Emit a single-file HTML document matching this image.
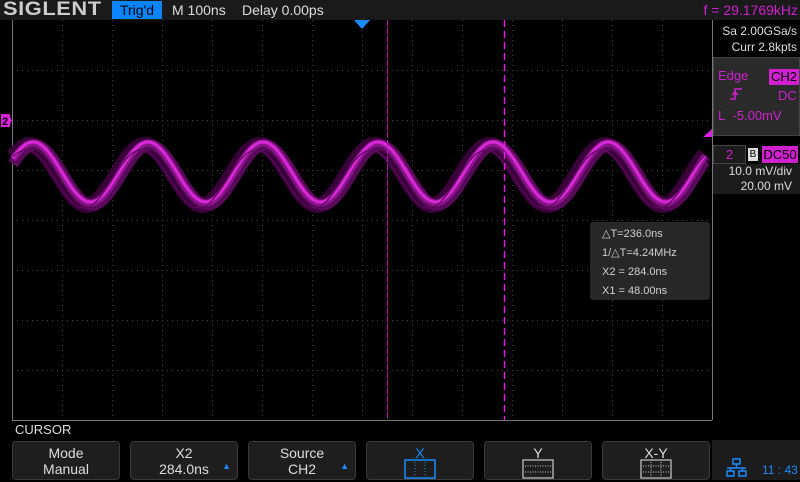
<!DOCTYPE html>
<html><head><meta charset="utf-8"><style>
body{margin:0;width:800px;height:480px;background:#000;overflow:hidden;font-family:"Liberation Sans",sans-serif;position:relative}
.a{position:absolute}
.top{left:0;top:0;width:800px;height:20px;background:#1a1a1a}
.btn{position:absolute;top:441px;width:108px;height:39px;background:#1e1e1e;border:1px solid #3a3a3a;border-radius:4px;color:#ddd;font-size:14px;text-align:center;line-height:16px;box-sizing:border-box;padding-top:3px}
</style></head><body>
<div class="a top"></div>
<div class="a" style="left:3px;top:0;font-size:19px;font-weight:bold;color:#ccc;letter-spacing:0.5px;line-height:20px;transform:scaleX(1.15);transform-origin:left">SIGLENT</div>
<div class="a" style="left:112px;top:1px;width:50px;height:18px;background:#0a84ff;color:#000;font-size:14px;line-height:18px;text-align:center">Trig'd</div>
<div class="a" style="left:172px;top:1px;color:#ddd;font-size:14px;line-height:18px">M 100ns</div>
<div class="a" style="left:242px;top:1px;color:#ddd;font-size:14px;line-height:18px">Delay 0.00ps</div>
<div class="a" style="top:1px;color:#d020d0;font-size:14px;line-height:18px;width:150px;text-align:right;right:2px">f = 29.1769kHz</div>

<svg class="a" style="left:0;top:0" width="800" height="480" id="s">
<g stroke="#444" stroke-width="1" stroke-dasharray="1,4" id="grid"></g>
<line x1="12.5" y1="20" x2="12.5" y2="420" stroke="#777"/>
<line x1="12" y1="420.5" x2="712" y2="420.5" stroke="#777"/>
<line x1="712.5" y1="20" x2="712.5" y2="420" stroke="#777"/>
<g id="w" fill="none"></g>
<line x1="387.5" y1="20" x2="387.5" y2="420" stroke="#b018b0" stroke-dasharray="6,2"/>
<line x1="504.5" y1="20" x2="504.5" y2="420" stroke="#e020e0" stroke-width="1.5" stroke-dasharray="7,4"/>
<polygon points="354,20 370,20 362,29" fill="#1a8cff"/>
<rect x="1" y="114" width="9" height="13" rx="1" fill="#e020e0"/><polygon points="10,117 12,120.5 10,124" fill="#e020e0"/><text x="2" y="125" font-size="11" font-weight="bold" fill="#000" font-family="Liberation Sans">2</text>
<polygon points="703,137 712,137 712,129" fill="#e020e0"/>
</svg>

<div class="a" style="left:590px;top:222px;width:120px;height:78px;background:#2a2a2a;border-radius:3px;opacity:.95;color:#ddd;font-size:11px;line-height:19px;padding:3px 0 0 12px;box-sizing:border-box">△T=236.0ns<br>1/△T=4.24MHz<br>X2 = 284.0ns<br>X1 = 48.00ns</div>

<div class="a" style="left:713px;top:20px;width:87px;height:36px;color:#ddd;font-size:12px;line-height:16px;text-align:right;padding:3px 3px 0 0;box-sizing:border-box">Sa 2.00GSa/s<br>Curr 2.8kpts</div>
<div class="a" style="left:713px;top:57px;width:87px;height:79px;background:#2a2a2a;border:1px solid #444;box-sizing:border-box"></div>
<div class="a" style="left:718px;top:68px;color:#d020d0;font-size:13px">Edge</div>
<div class="a" style="left:769px;top:69px;width:30px;height:16px;background:#d020d0;color:#000;font-size:13px;line-height:16px;text-align:center">CH2</div>
<svg class="a" style="left:729px;top:87px" width="14" height="14"><path d="M1 12H6V2H13M3 8L6 5L9 8" stroke="#d020d0" fill="none" stroke-width="1.5"/></svg>
<div class="a" style="left:778px;top:88px;color:#d020d0;font-size:13px">DC</div>
<div class="a" style="left:718px;top:108px;color:#d020d0;font-size:13px">L&nbsp; -5.00mV</div>
<div class="a" style="left:713px;top:145px;width:33px;height:19px;background:#1c1c1c;border:1px solid #444;color:#d020d0;font-size:13px;line-height:18px;text-align:center;box-sizing:border-box">2</div>
<div class="a" style="left:748px;top:148px;width:10px;height:13px;background:#ddd;color:#000;font-size:10px;line-height:13px;text-align:center">B</div>
<div class="a" style="left:762px;top:146px;width:36px;height:17px;background:#d020d0;color:#000;font-size:13px;line-height:17px;text-align:center">DC50</div>
<div class="a" style="left:713px;top:164px;width:87px;height:30px;background:#1c1c1c;color:#ddd;font-size:12px;line-height:15px;text-align:right;padding-right:8px;box-sizing:border-box">10.0 mV/div<br>20.00 mV</div>

<div class="a" style="left:15px;top:422px;color:#ddd;font-size:13px">CURSOR</div>
<div class="btn" style="left:12px">Mode<br>Manual</div>
<div class="btn" style="left:130px">X2<br>284.0ns<span class="a" style="right:6px;top:16px;color:#1a8cff;font-size:9px">▲</span></div>
<div class="btn" style="left:248px">Source<br>CH2<span class="a" style="right:6px;top:16px;color:#1a8cff;font-size:9px">▲</span></div>
<div class="btn" style="left:366px;color:#1a8cff">X<br><svg width="32" height="20" style="margin-top:-2px"><rect x="1" y="1" width="30" height="18" fill="none" stroke="#1a8cff" stroke-width="1.5"/><path d="M11 3V17M21 3V17" stroke="#1a8cff" stroke-dasharray="1,2"/></svg></div>
<div class="btn" style="left:484px">Y<br><svg width="32" height="20" style="margin-top:-2px"><rect x="1" y="1" width="30" height="18" fill="none" stroke="#ccc" stroke-width="1.2"/><path d="M3 7H29M3 13H29" stroke="#ccc" stroke-dasharray="1,1.5"/></svg></div>
<div class="btn" style="left:602px">X-Y<br><svg width="32" height="20" style="margin-top:-2px"><rect x="1" y="1" width="30" height="18" fill="none" stroke="#ccc" stroke-width="1.2"/><path d="M3 7H29M3 13H29M11 3V17M21 3V17" stroke="#ccc" stroke-dasharray="1,1.5"/></svg></div>
<div class="a" style="left:712px;top:440px;width:88px;height:40px;background:#1c1c1c"></div>
<svg class="a" style="left:726px;top:458px" width="22" height="20"><g fill="none" stroke="#1a8cff" stroke-width="1.5"><rect x="7" y="1" width="7" height="5"/><rect x="1" y="13" width="7" height="5"/><rect x="13" y="13" width="7" height="5"/><path d="M10.5 6V10M1 10H20M4.5 10V13M16.5 10V13"/></g></svg>
<div class="a" style="left:762px;top:463px;color:#1a8cff;font-size:12px">11 : 43</div>

<script>
var g=document.getElementById('grid'),h='';
for(var x=62;x<712;x+=50)h+='<line x1="'+(x+.5)+'" y1="20" x2="'+(x+.5)+'" y2="420"/>';
for(var y=70;y<420;y+=50)h+='<line x1="12" y1="'+(y+.5)+'" x2="712" y2="'+(y+.5)+'"/>';
g.innerHTML=h;
function p(dx,dy,a){var s='';for(var x=13;x<=705;x+=2){var y=172+dy-a*Math.cos(2*Math.PI*(x-378-dx)/115);s+=(s?'L':'M')+x+' '+y.toFixed(1);}return s;}
var w='';
w+='<path d="'+p(-3,3,30)+'" stroke="#3a003a" stroke-width="16"/>';
w+='<path d="'+p(2,3,30)+'" stroke="#5a0a5a" stroke-width="11"/>';
w+='<path d="'+p(0,1,30)+'" stroke="#8a158a" stroke-width="7"/>';
w+='<path d="'+p(0,0,30)+'" stroke="#d828d8" stroke-width="3"/>';
w+='<path d="'+p(-7,7,29)+'" stroke="#600860" stroke-width="1.2"/>';
document.getElementById('w').innerHTML=w;
</script>
</body></html>
